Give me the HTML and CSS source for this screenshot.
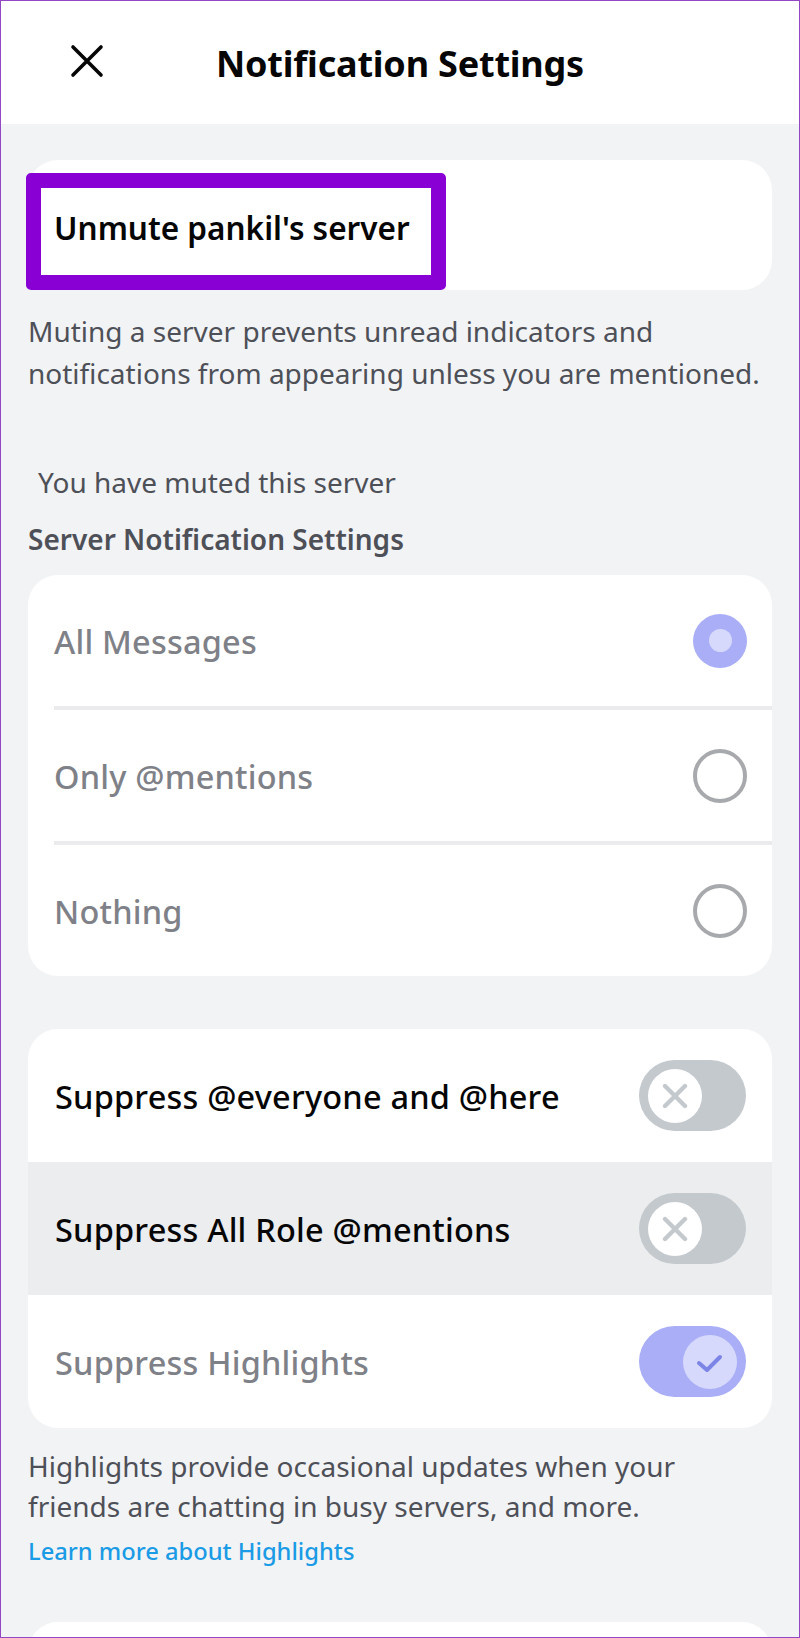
FILE: index.html
```
<!DOCTYPE html>
<html>
<head>
    <meta charset="UTF-8">
    <title>Notification Settings</title>
    <link rel="stylesheet" href="styles.css">
</head>
<body>
<div class="frame">
    <div class="topbar">
        <div class="close_btn">
            <svg width="34" height="34" viewBox="0 0 34 34">
                <path d="M3 3 L31 31 M31 3 L3 31" stroke="#060607" stroke-width="3.6" stroke-linecap="round" fill="none"/>
            </svg>
        </div>
        <div class="title">Notification Settings</div>
        <div></div>
    </div>

    <div class="content">
        <div class="card unmute_card">
            <div class="marked">Unmute pankil's server</div>
        </div>
        <p class="hint">Muting a server prevents unread indicators and notifications from appearing unless you are mentioned.</p>

        <p class="muted_note">You have muted this server</p>
        <h3 class="section_title">Server Notification Settings</h3>

        <div class="card radio_card">
            <div class="option">
                <span class="label dim">All Messages</span>
                <span class="radio checked"><span class="dot"></span></span>
            </div>
            <div class="option">
                <span class="label dim">Only @mentions</span>
                <span class="radio"></span>
            </div>
            <div class="option">
                <span class="label dim">Nothing</span>
                <span class="radio"></span>
            </div>
        </div>

        <div class="card toggle_card">
            <div class="toggle_row">
                <span class="label">Suppress @everyone and @here</span>
                <span class="switch">
                    <span class="knob">
                        <svg width="26" height="26" viewBox="0 0 26 26"><path d="M3 3 L23 23 M23 3 L3 23" stroke="#c4c9ce" stroke-width="4.4" stroke-linecap="round" fill="none"/></svg>
                    </span>
                </span>
            </div>
            <div class="toggle_row pressed">
                <span class="label">Suppress All Role @mentions</span>
                <span class="switch">
                    <span class="knob">
                        <svg width="26" height="26" viewBox="0 0 26 26"><path d="M3 3 L23 23 M23 3 L3 23" stroke="#c4c9ce" stroke-width="4.4" stroke-linecap="round" fill="none"/></svg>
                    </span>
                </span>
            </div>
            <div class="toggle_row">
                <span class="label dim">Suppress Highlights</span>
                <span class="switch on">
                    <span class="knob">
                        <svg width="54" height="54" viewBox="0 0 54 54"><path d="M16 28 L24 35 L37 22" stroke="#7c84e6" stroke-width="4" stroke-linecap="round" stroke-linejoin="round" fill="none"/></svg>
                    </span>
                </span>
            </div>
        </div>

        <p class="hint foot">Highlights provide occasional updates when your friends are chatting in busy servers, and more.</p>
        <a class="learn_more" href="#">Learn more about Highlights</a>

        <div class="card next_card"></div>
    </div>
</div>
</body>
</html>
```

FILE: styles.css
```
body{
    margin:0;
    font-family:"Noto Sans","Liberation Sans",sans-serif;
    color:#060607;
}
.frame{
    width:800px;
    height:1638px;
    box-sizing:border-box;
    border:1px solid #9447c4;
    background:#f2f3f5;
    overflow:hidden;
}
.topbar{
    height:123px;
    background:#fff;
    display:grid;
    grid-template-columns:1fr auto 1fr;
    align-items:center;
}
.close_btn{
    padding-left:69px;
    display:flex;
    align-items:center;
    margin-top:-4px;
}
.title{
    font-size:36px;
    font-weight:700;
    letter-spacing:-0.2px;
    margin-top:2px;
}
.content{
    padding:0 27px;
}
.card{
    background:#fff;
    border-radius:30px;
}
.unmute_card{
    margin-top:36px;
    height:130px;
    display:flex;
    align-items:flex-end;
}
.marked{
    box-sizing:border-box;
    width:420px;
    height:117px;
    margin-left:-2px;
    border:15px solid #8800d3;
    border-radius:5px;
    background:#fff;
    padding:0 0 8px 13px;
    display:flex;
    align-items:center;
    font-size:31.5px;
    font-weight:600;
}
.hint{
    margin:20px 0 0;
    font-size:28px;
    line-height:42px;
    color:#4e5058;
}
.muted_note{
    margin:69px 0 0;
    padding-left:10px;
    font-size:28px;
    line-height:38px;
    color:#4e5058;
}
.section_title{
    margin:19px 0 0;
    font-size:28px;
    line-height:38px;
    font-weight:600;
    color:#4e5058;
}
.radio_card{
    margin-top:17px;
    padding-left:26px;
}
.option{
    height:131px;
    padding-right:25px;
    display:flex;
    align-items:center;
    justify-content:space-between;
}
.option + .option{
    border-top:4px solid #ebebed;
}
.label{
    font-size:32.5px;
    font-weight:500;
    letter-spacing:0.2px;
    padding-top:2px;
}
.dim{
    color:#7f8188;
}
.radio{
    width:54px;
    height:54px;
    box-sizing:border-box;
    border-radius:50%;
    border:4px solid #a7a9ad;
    display:flex;
    align-items:center;
    justify-content:center;
}
.radio.checked{
    border:none;
    background:#a9aef6;
}
.radio .dot{
    width:23px;
    height:23px;
    border-radius:50%;
    background:#d6d9fc;
}
.toggle_card{
    margin-top:53px;
    overflow:hidden;
}
.toggle_row{
    height:133px;
    padding:0 26px 0 27px;
    display:flex;
    align-items:center;
    justify-content:space-between;
}
.toggle_row.pressed{
    background:#ebedef;
}
.switch{
    width:107px;
    height:71px;
    box-sizing:border-box;
    border-radius:36px;
    background:#c4c9ce;
    padding:0 9px;
    display:flex;
    align-items:center;
}
.switch.on{
    background:#a9aef6;
    justify-content:flex-end;
}
.knob{
    width:54px;
    height:54px;
    border-radius:50%;
    background:#fff;
    display:flex;
    align-items:center;
    justify-content:center;
}
.switch.on .knob{
    background:#d6d9fc;
}
.foot{
    margin-top:18px;
    line-height:40px;
}
.learn_more{
    display:block;
    margin-top:7px;
    font-size:23.7px;
    line-height:36px;
    font-weight:500;
    color:#1a9be6;
    text-decoration:none;
}
.next_card{
    margin-top:53px;
    height:120px;
}
```
